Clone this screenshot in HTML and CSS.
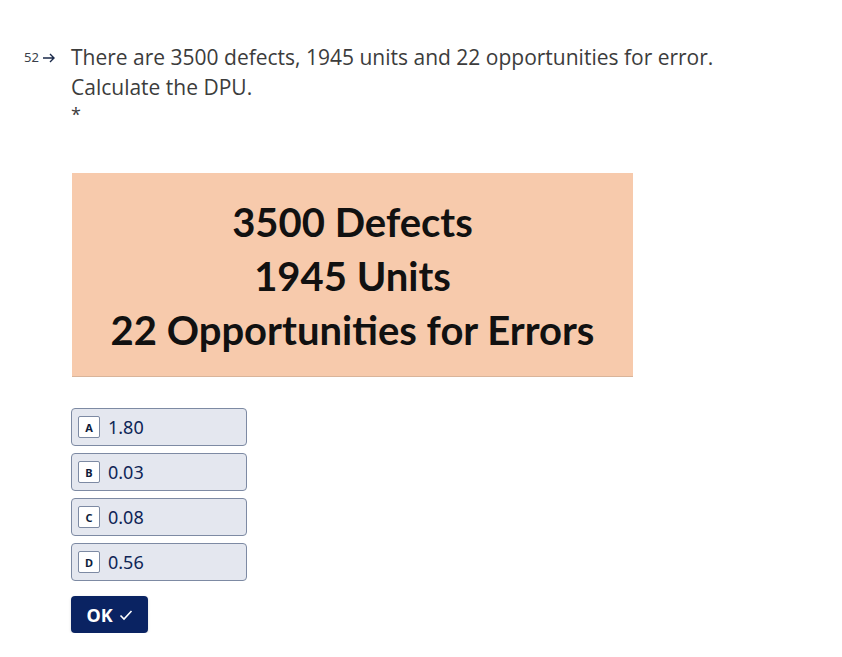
FILE: index.html
```html
<!DOCTYPE html>
<html>
<head>
<meta charset="utf-8">
<link rel="stylesheet" href="styles.css">
</head>
<body>
<div class="page">
  <div class="question">
    <div class="qnum"><span>52</span><svg class="arrow" width="14" height="12" viewBox="0 0 14 12"><path d="M1 6h11M8 2l4 4-4 4" fill="none" stroke="#1b2a4a" stroke-width="1.4"/></svg></div>
    <div class="qbody">
      <div class="qtext">There are 3500 defects, 1945 units and 22 opportunities for error.<br>Calculate the DPU.</div>
      <div class="req">*</div>
      <div class="figure">
        <div class="fline">3500 Defects</div>
        <div class="fline">1945 Units</div>
        <div class="fline">22 Opportunities for Errors</div>
      </div>
      <div class="options">
        <div class="opt"><span class="key">A</span><span class="val">1.80</span></div>
        <div class="opt"><span class="key">B</span><span class="val">0.03</span></div>
        <div class="opt"><span class="key">C</span><span class="val">0.08</span></div>
        <div class="opt"><span class="key">D</span><span class="val">0.56</span></div>
      </div>
      <button class="ok">OK <svg width="14" height="12" viewBox="0 0 14 12"><path d="M1.5 6.5l3.5 3.5L12.5 2" fill="none" stroke="#fff" stroke-width="1.6"/></svg></button>
    </div>
  </div>
</div>
</body>
</html>
```
FILE: styles.css
```css
html, body { margin: 0; padding: 0; background: #fff; }
body { font-family: "Open Sans", "Noto Sans", sans-serif; }
.page { padding: 42px 0 0 24px; }
.question { display: flex; }
.qnum { width: 47px; display: flex; align-items: center; gap: 3px; height: 30px; font-size: 13px; color: #3a3f4a; font-family: "Noto Sans", sans-serif; }
.arrow { margin-top: 1px; }
.qbody { display: flex; flex-direction: column; }
.qtext { font-size: 21px; line-height: 30px; color: #3c3c3c; }
.req { font-size: 18px; line-height: 20px; color: #3c3c3c; margin-top: 2px; }
.figure { margin-top: 49px; margin-left: 1px; width: 561px; height: 204px; box-sizing: border-box; background: #f7caac; border-bottom: 1px solid #d9b49a; display: flex; flex-direction: column; align-items: center; justify-content: center; padding-top: 3px; }
.fline { font-family: "Lato", "Open Sans", sans-serif; font-weight: 700; font-size: 40px; line-height: 54px; color: #111; }
.options { margin-top: 31px; display: flex; flex-direction: column; gap: 7px; }
.opt { width: 176px; height: 38px; box-sizing: border-box; background: #e4e7ef; border: 1px solid #7d8aa3; border-radius: 4px; display: flex; align-items: center; padding-left: 6px; gap: 8px; }
.key { width: 22px; height: 22px; box-sizing: border-box; background: #fff; border: 1px solid #7d8aa3; border-radius: 2px; display: flex; align-items: center; justify-content: center; font-family: "Noto Sans", sans-serif; font-weight: 700; font-size: 11px; color: #0e1c3a; }
.val { font-size: 18px; color: #0e2556; font-family: "Noto Sans", sans-serif; }
.ok { margin-top: 15px; width: 77px; height: 37px; border: none; border-radius: 4px; background: #0a2362; color: #fff; font-family: "Noto Sans", sans-serif; font-weight: 700; font-size: 18px; display: flex; align-items: center; justify-content: center; gap: 6px; padding: 0; box-shadow: 0 1px 3px rgba(0,0,0,0.15); }
```
